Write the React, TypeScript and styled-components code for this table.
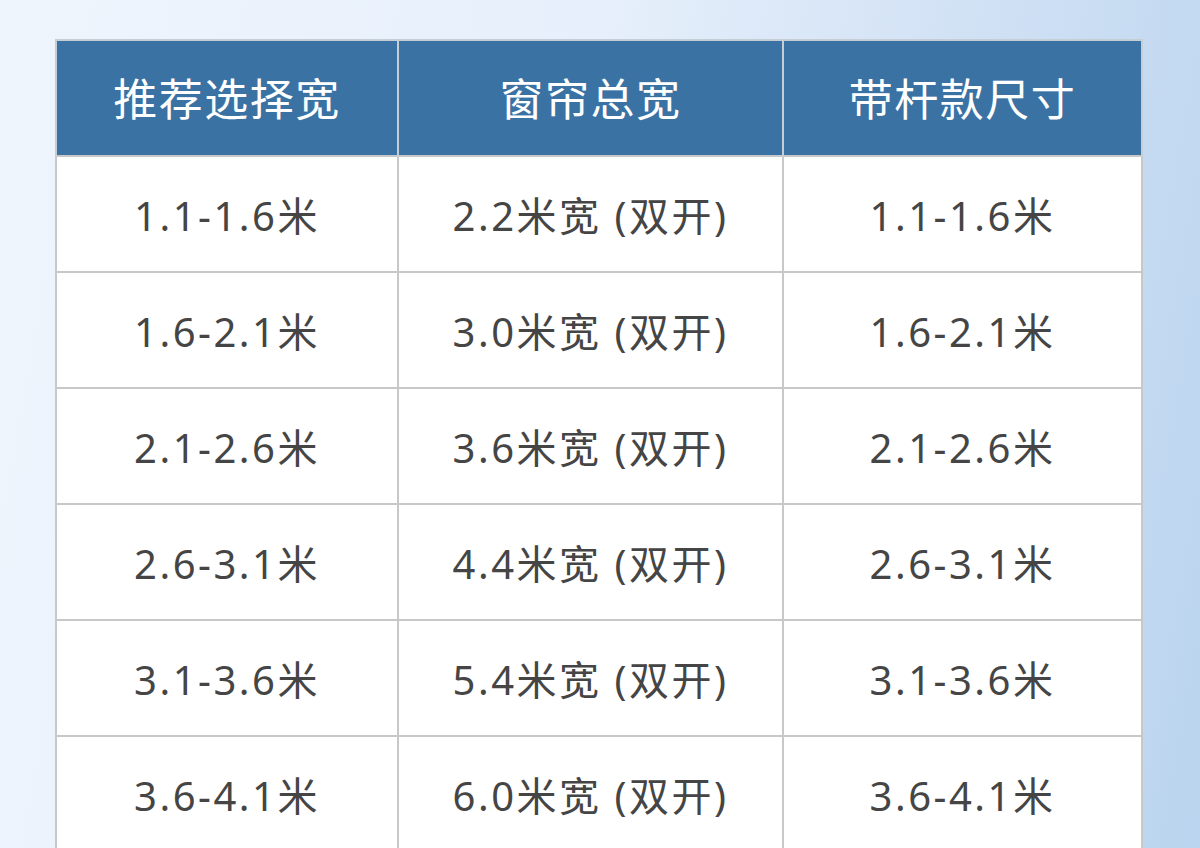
import React from "react";
import styled, { createGlobalStyle } from "styled-components";

const Global = createGlobalStyle`
  html, body { margin: 0; padding: 0; }
  body {
    width: 1200px;
    height: 848px;
    overflow: hidden;
    font-family: "Noto Sans", "Noto Sans CJK SC", sans-serif;
  }
`;

const Page = styled.div`
  width: 1200px;
  height: 848px;
  box-sizing: border-box;
  padding: 39px 0 0 55px;
  background: linear-gradient(100deg, #eff5fd 0%, #e6effb 45%, #cfe0f4 75%, #bad4ef 100%);
  overflow: hidden;
`;

const Table = styled.table`
  border-collapse: collapse;
  table-layout: fixed;
  width: 1086px;
  background: #ffffff;
`;

const HeadCell = styled.th<{ $first?: boolean }>`
  background: #3a72a4;
  color: #ffffff;
  font-weight: 400;
  font-size: 44px;
  height: 116px;
  padding: 0 0 2px;
  text-align: center;
  border: 2px solid #c5cdd6;
  border-bottom: none;
  border-left-color: ${(p) => (p.$first ? "#c5cdd6" : "#b4c8dc")};
  letter-spacing: 1.5px;
  box-sizing: border-box;
`;

const Cell = styled.td`
  color: #454545;
  font-size: 40px;
  height: 116px;
  padding: 0;
  text-align: center;
  border: 2px solid #c8c8c8;
  letter-spacing: 2.5px;
  box-sizing: border-box;
`;

const rows = [
  ["1.1-1.6米", "2.2米宽 (双开)", "1.1-1.6米"],
  ["1.6-2.1米", "3.0米宽 (双开)", "1.6-2.1米"],
  ["2.1-2.6米", "3.6米宽 (双开)", "2.1-2.6米"],
  ["2.6-3.1米", "4.4米宽 (双开)", "2.6-3.1米"],
  ["3.1-3.6米", "5.4米宽 (双开)", "3.1-3.6米"],
  ["3.6-4.1米", "6.0米宽 (双开)", "3.6-4.1米"],
];

export default function App() {
  return (
    <>
      <Global />
      <Page>
        <Table>
          <colgroup>
            <col style={{ width: 342 }} />
            <col style={{ width: 385 }} />
            <col style={{ width: 359 }} />
          </colgroup>
          <thead>
            <tr>
              <HeadCell $first>推荐选择宽</HeadCell>
              <HeadCell>窗帘总宽</HeadCell>
              <HeadCell>带杆款尺寸</HeadCell>
            </tr>
          </thead>
          <tbody>
            {rows.map((r, i) => (
              <tr key={i}>
                {r.map((c, j) => (
                  <Cell key={j}>{c}</Cell>
                ))}
              </tr>
            ))}
          </tbody>
        </Table>
      </Page>
    </>
  );
}
